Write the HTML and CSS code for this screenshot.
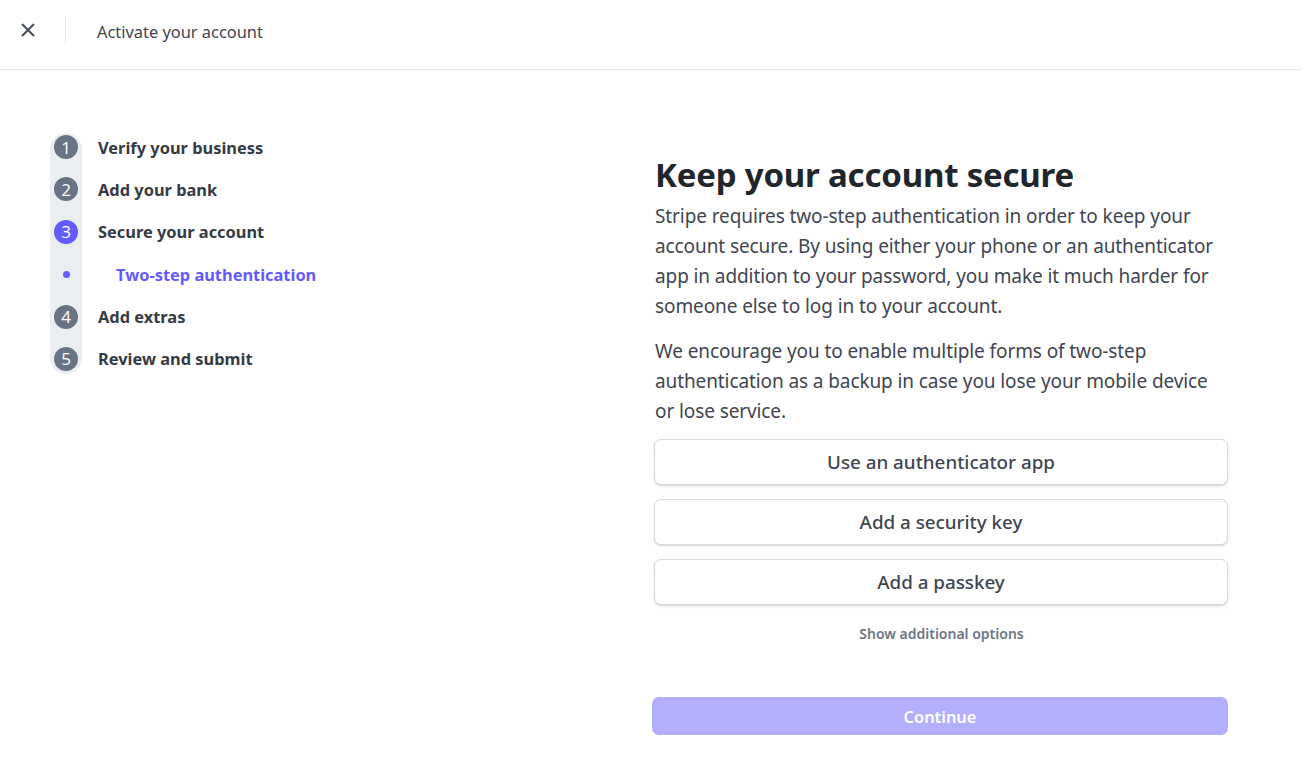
FILE: index.html
```html
<!DOCTYPE html>
<html lang="en">
<head>
<meta charset="utf-8">
<title>Activate your account</title>
<link rel="stylesheet" href="styles.css">
</head>
<body>
<header class="topbar">
  <button class="close" aria-label="Close">
    <svg width="14" height="14" viewBox="0 0 14 14"><path d="M1.5 1.5l11 11M12.5 1.5l-11 11" stroke="#474e5a" stroke-width="2" stroke-linecap="round" fill="none"/></svg>
  </button>
  <span class="sep"></span>
  <span class="title">Activate your account</span>
</header>
<div class="page">
  <nav class="steps">
    <div class="track">
      <div class="step"><span class="num">1</span><span class="label">Verify your business</span></div>
      <div class="step"><span class="num">2</span><span class="label">Add your bank</span></div>
      <div class="step"><span class="num active">3</span><span class="label">Secure your account</span></div>
      <div class="step sub"><span class="dot-wrap"><span class="dot"></span></span><span class="label">Two-step authentication</span></div>
      <div class="step"><span class="num">4</span><span class="label">Add extras</span></div>
      <div class="step"><span class="num">5</span><span class="label">Review and submit</span></div>
    </div>
  </nav>
  <main class="content">
    <h1>Keep your account secure</h1>
    <p class="p1">Stripe requires two-step authentication in order to keep your account secure. By using either your phone or an authenticator app in addition to your password, you make it much harder for someone else to log in to your account.</p>
    <p class="p2">We encourage you to enable multiple forms of two-step authentication as a backup in case you lose your mobile device or lose service.</p>
    <div class="options">
      <button class="opt">Use an authenticator app</button>
      <button class="opt">Add a security key</button>
      <button class="opt">Add a passkey</button>
    </div>
    <button class="more">Show additional options</button>
    <button class="continue" disabled>Continue</button>
  </main>
</div>
</body>
</html>
```
FILE: styles.css
```css
* { box-sizing: border-box; }
html, body { margin: 0; padding: 0; background: #fff; }
body {
  font-family: "Noto Sans", "Open Sans", sans-serif;
  color: #414552;
  width: 1302px;
  height: 770px;
  overflow: hidden;
}
button { font-family: inherit; cursor: pointer; }

.topbar {
  height: 70px;
  border-bottom: 1px solid #e0e2e8;
  display: flex;
  align-items: center;
}
.close {
  width: 28px;
  height: 28px;
  margin-left: 14px;
  padding: 0;
  border: 0;
  background: none;
  display: flex;
  align-items: center;
  justify-content: center;
  margin-top: -9px;
}
.sep {
  width: 1px;
  height: 26px;
  background: #e3e5ea;
  margin-left: 23px;
  margin-top: -10px;
}
.title {
  margin-left: 31px;
  font-size: 16.4px;
  color: #414552;
  margin-top: -7px;
}

.page {
  display: flex;
  padding-left: 50px;
}
.steps {
  width: 604px;
  padding-top: 63px;
}
.track {
  display: flex;
  flex-direction: column;
  gap: 18.4px;
  padding: 2px 0 3px;
  position: relative;
}
.track::before {
  content: "";
  position: absolute;
  left: 0;
  top: 0;
  bottom: 0;
  width: 32px;
  background: #ebeef1;
  border-radius: 16px;
}
.step {
  position: relative;
  display: flex;
  align-items: center;
  height: 24px;
}
.num, .dot-wrap {
  width: 24px;
  height: 24px;
  margin-left: 4px;
  border-radius: 50%;
  background: #687385;
  color: #fff;
  font-size: 17px;
  font-family: "Open Sans", sans-serif;
  font-weight: 400;
  display: flex;
  align-items: center;
  justify-content: center;
  flex: none;
  line-height: 1;
}
.num.active { background: #635bff; }
.dot-wrap { background: none; }
.dot {
  width: 7px;
  height: 7px;
  border-radius: 50%;
  background: #635bff;
}
.label {
  margin-left: 20px;
  font-size: 16.4px;
  font-weight: 700;
  color: #353a44;
}
.step.sub .label {
  margin-left: 38px;
  color: #635bff;
}

.content {
  width: 575px;
  padding-top: 85px;
}
h1 {
  margin: 0 0 0 1px;
  font-size: 33px;
  line-height: 40px;
  font-weight: 700;
  color: #21252c;
  letter-spacing: -0.2px;
}
.content p {
  margin: 0 0 0 1px;
  font-size: 19px;
  line-height: 30px;
  color: #414552;
  letter-spacing: -0.1px;
}
.p1 { margin-top: 6px !important; }
.p2 { margin-top: 15px !important; }
.options {
  display: flex;
  flex-direction: column;
  gap: 14px;
  margin-top: 13px;
}
.opt {
  height: 46px;
  width: 574px;
  border: 1px solid #d5dbe1;
  border-radius: 7px;
  background: #fff;
  box-shadow: 0 1px 1px rgba(0,0,0,0.12), 0 2px 4px rgba(60,66,87,0.06);
  font-size: 18.8px;
  font-weight: 500;
  color: #414552;
}
.more {
  display: block;
  margin: 19px auto 0;
  background: none;
  border: 0;
  font-size: 14px;
  font-weight: 600;
  color: #6c7688;
  padding: 0;
}
.continue {
  display: block;
  margin-top: 54px;
  margin-left: -2px;
  width: 576px;
  height: 38px;
  border: 0;
  border-radius: 7px;
  background: #b3afff;
  color: #fff;
  font-size: 16.4px;
  font-weight: 600;
}
```
